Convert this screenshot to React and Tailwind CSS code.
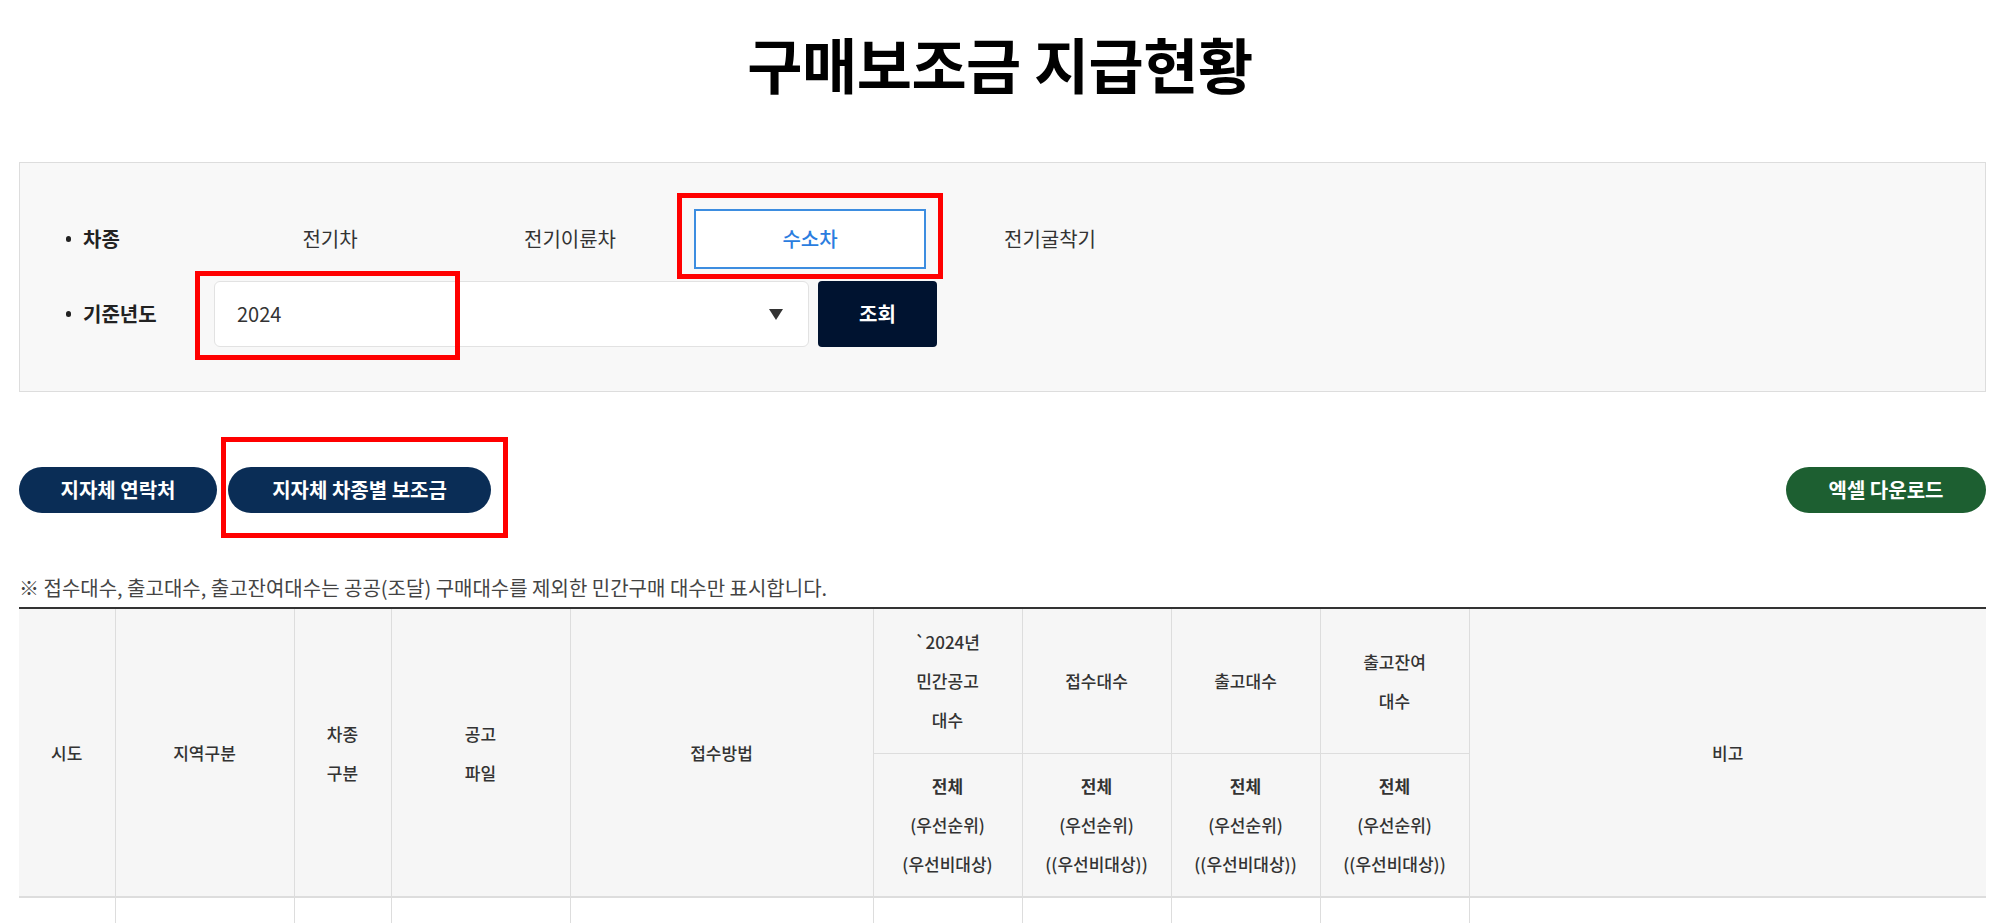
import { useState } from "react"

const tabs = ["전기차", "전기이륜차", "수소차", "전기굴착기"]

const Label = ({ text }) => (
    <div className="w-[150px] flex items-center text-[20px] font-bold text-[#222]">
        <span className="w-[5px] h-[6px] rounded-full bg-[#222] ml-[2px] mr-[12px]"></span>
        {text}
    </div>
)

const HeadCell = ({ children, rowSpan, className = "" }) => (
    <th rowSpan={rowSpan} className={"border border-[#ddd] bg-[#f6f6f6] text-[17px] font-medium text-[#333] leading-[39px] align-middle " + className}>
        {children}
    </th>
)

const App = () => {
    const [carType, setCarType] = useState("수소차")

    return (
        <div className="relative w-[2000px] min-h-[923px] bg-white font-['Noto_Sans_CJK_KR','Noto_Sans',sans-serif] text-[#333] overflow-hidden">
            {/* 제목 */}
            <h1 className="pt-[27px] leading-[72px] text-center text-[60px] font-bold tracking-[-0.5px] text-black">
                구매보조금 지급현황
            </h1>

            <div className="ml-[19px] w-[1967px]">
                {/* 검색 영역 */}
                <div className="mt-[63px] h-[230px] bg-[#f8f8f8] border border-[#dddddd] pl-[44px] pt-[46px]">
                    <div className="flex h-[60px]">
                        <Label text="차종" />
                        <div className="flex gap-[8px]">
                            {tabs.map((t) => (
                                <button
                                    key={t}
                                    onClick={() => setCarType(t)}
                                    className={
                                        carType == t
                                            ? "w-[232px] h-[60px] bg-white border-2 border-[#3d8de0] text-[#2a7ddf] text-[20px] font-medium"
                                            : "w-[232px] h-[60px] text-[#333] text-[20px]"
                                    }
                                >
                                    {t}
                                </button>
                            ))}
                        </div>
                    </div>

                    <div className="flex h-[66px] mt-[12px]">
                        <Label text="기준년도" />
                        <div className="w-[595px] h-[66px] bg-white border border-[#e2e2e2] rounded-[6px] flex items-center justify-between pl-[22px] pr-[25px]">
                            <span className="text-[20px] text-[#333]">2024</span>
                            <svg width="14" height="11" viewBox="0 0 14 11">
                                <polygon points="0,0 14,0 7,11" fill="#333" />
                            </svg>
                        </div>
                        <button className="ml-[9px] w-[119px] h-[66px] rounded-[4px] bg-[#001330] text-white text-[20px] font-bold">
                            조회
                        </button>
                    </div>
                </div>

                {/* 버튼 영역 */}
                <div className="mt-[75px] flex items-center justify-between">
                    <div className="flex gap-[11px]">
                        <button className="w-[198px] h-[46px] rounded-full bg-[#0a2d56] text-white text-[20px] font-bold">
                            지자체 연락처
                        </button>
                        <button className="w-[263px] h-[46px] rounded-full bg-[#0a2d56] text-white text-[20px] font-bold">
                            지자체 차종별 보조금
                        </button>
                    </div>
                    <button className="w-[200px] h-[46px] rounded-full bg-[#1d5f31] text-white text-[20px] font-bold">
                        엑셀 다운로드
                    </button>
                </div>

                <p className="mt-[62px] text-[20px] leading-[26px] text-[#444]">
                    ※ 접수대수, 출고대수, 출고잔여대수는 공공(조달) 구매대수를 제외한 민간구매 대수만 표시합니다.
                </p>

                {/* 표 */}
                <table className="mt-[6px] w-[1967px] table-fixed border-collapse border-t-2 border-t-[#333]">
                    <colgroup>
                        <col className="w-[96px]" />
                        <col className="w-[179px]" />
                        <col className="w-[97px]" />
                        <col className="w-[179px]" />
                        <col className="w-[303px]" />
                        <col className="w-[149px]" />
                        <col className="w-[149px]" />
                        <col className="w-[149px]" />
                        <col className="w-[149px]" />
                        <col className="w-[517px]" />
                    </colgroup>
                    <thead>
                        <tr className="h-[145px]">
                            <HeadCell rowSpan={2} className="border-l-0 border-t-[#333]">시도</HeadCell>
                            <HeadCell rowSpan={2} className="border-t-[#333]">지역구분</HeadCell>
                            <HeadCell rowSpan={2} className="border-t-[#333]">차종<br />구분</HeadCell>
                            <HeadCell rowSpan={2} className="border-t-[#333]">공고<br />파일</HeadCell>
                            <HeadCell rowSpan={2} className="border-t-[#333]">접수방법</HeadCell>
                            <HeadCell className="border-t-[#333]">`2024년<br />민간공고<br />대수</HeadCell>
                            <HeadCell className="border-t-[#333]">접수대수</HeadCell>
                            <HeadCell className="border-t-[#333]">출고대수</HeadCell>
                            <HeadCell className="border-t-[#333]">출고잔여<br />대수</HeadCell>
                            <HeadCell rowSpan={2} className="border-r-0 border-t-[#333]">비고</HeadCell>
                        </tr>
                        <tr className="h-[144px]">
                            <HeadCell><span className="font-bold">전체</span><br />(우선순위)<br />(우선비대상)</HeadCell>
                            <HeadCell><span className="font-bold">전체</span><br />(우선순위)<br />((우선비대상))</HeadCell>
                            <HeadCell><span className="font-bold">전체</span><br />(우선순위)<br />((우선비대상))</HeadCell>
                            <HeadCell><span className="font-bold">전체</span><br />(우선순위)<br />((우선비대상))</HeadCell>
                        </tr>
                    </thead>
                    <tbody>
                        <tr className="h-[60px] border-t-2 border-t-[#ddd]">
                            <td className="border border-[#ddd] border-l-0"></td>
                            <td className="border border-[#ddd]"></td>
                            <td className="border border-[#ddd]"></td>
                            <td className="border border-[#ddd]"></td>
                            <td className="border border-[#ddd]"></td>
                            <td className="border border-[#ddd]"></td>
                            <td className="border border-[#ddd]"></td>
                            <td className="border border-[#ddd]"></td>
                            <td className="border border-[#ddd]"></td>
                            <td className="border border-[#ddd] border-r-0"></td>
                        </tr>
                    </tbody>
                </table>
            </div>

            {/* 강조 표시 (빨간 박스) */}
            <div className="absolute left-[677px] top-[193px] w-[266px] h-[86px] border-[5px] border-[#ff0000] pointer-events-none"></div>
            <div className="absolute left-[195px] top-[271px] w-[265px] h-[89px] border-[5px] border-[#ff0000] pointer-events-none"></div>
            <div className="absolute left-[221px] top-[437px] w-[287px] h-[101px] border-[5px] border-[#ff0000] pointer-events-none"></div>
        </div>
    )
}

export default App
